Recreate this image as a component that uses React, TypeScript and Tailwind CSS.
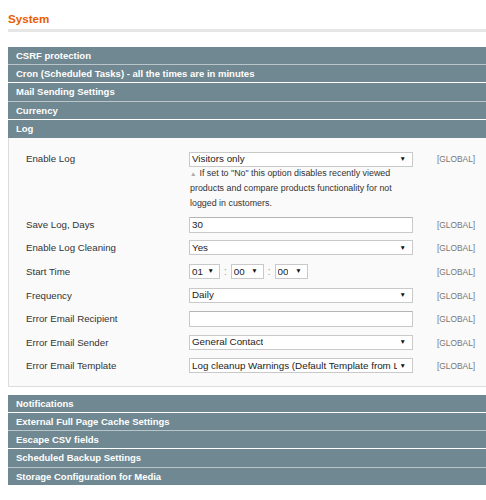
import React from 'react';

const topSections = [
  'CSRF protection',
  'Cron (Scheduled Tasks) - all the times are in minutes',
  'Mail Sending Settings',
  'Currency',
];

const bottomSections = [
  'Notifications',
  'External Full Page Cache Settings',
  'Escape CSV fields',
  'Scheduled Backup Settings',
  'Storage Configuration for Media',
];

function SectionHeader({ title, index }: { title: string; index: number }) {
  return (
    <div
      className={`h-[18.2px] bg-[#6f8891] pl-2 text-[9.5px] font-bold leading-[17px] text-white border-b ${
        index % 2 === 0 ? 'border-[#b9c5c9]' : 'border-white'
      }`}
    >
      {title}
    </div>
  );
}

function Select({ value, className = 'w-[224px] pr-[6px]' }: { value: string; className?: string }) {
  return (
    <div
      className={`flex h-[15px] items-center justify-between border border-[#c9c9c9] bg-white pl-[2px] text-[9.8px] leading-none text-[#222] ${className}`}
    >
      <span className="min-w-0 overflow-hidden whitespace-nowrap">{value}</span>
      <span className="ml-[3px] shrink-0 text-[6.5px] text-[#111]">▼</span>
    </div>
  );
}

function Input({ value = '' }: { value?: string }) {
  return (
    <div className="flex h-[16px] w-[224px] items-center border border-[#c9c9c9] border-t-[#b5b5b5] bg-white pl-[2px] text-[9.8px] leading-none text-[#222]">
      {value}
    </div>
  );
}

function Row({ label, children }: { label: string; children: React.ReactNode }) {
  return (
    <div className="flex min-h-[23.6px] items-start">
      <div className="w-[180px] pl-[17px] pt-[1px] text-[9.7px] leading-[14px] text-[#333]">{label}</div>
      <div className="w-[224px]">{children}</div>
      <div className="pl-[24px] pt-[1px] text-[8.4px] leading-[14px] text-[#777]">[GLOBAL]</div>
    </div>
  );
}

export default function App() {
  return (
    <div className="min-h-[500px] bg-white pl-2 pt-[11px] font-['Liberation_Sans',Arial,sans-serif]">
      <h3 className="text-[11.6px] font-bold leading-[15px] text-[#eb5e00]">System</h3>
      <div className="mt-[3px] h-[3px] bg-[#e6e6e6]" />

      <div className="mt-[15px]">
        {topSections.map((t, i) => (
          <SectionHeader key={t} title={t} index={i} />
        ))}
        <div className="h-[18px] bg-[#6f8891] pl-2 text-[9.5px] font-bold leading-[17px] text-white">Log</div>
        <div className="border border-t-0 border-r-0 border-[#dcdcdc] bg-[#fafafa] pb-[4px] pt-[14px]">
          <div className="mb-[6px] flex items-start">
            <div className="w-[180px] pl-[17px] text-[9.7px] leading-[14px] text-[#333]">Enable Log</div>
            <div className="w-[224px]">
              <Select value="Visitors only" />
              <p className="mt-[-1px] pl-[1px] text-[8.9px] leading-[15px] text-[#333]">
                <span className="mr-[3px] text-[6.5px] text-[#aaa]">▲</span>
                If set to "No" this option disables recently viewed products and compare products functionality for not
                logged in customers.
              </p>
            </div>
            <div className="pl-[24px] text-[8.4px] leading-[14px] text-[#777]">[GLOBAL]</div>
          </div>
          <Row label="Save Log, Days">
            <Input value="30" />
          </Row>
          <Row label="Enable Log Cleaning">
            <Select value="Yes" />
          </Row>
          <Row label="Start Time">
            <div className="flex items-center text-[10px] text-[#999]">
              <Select value="01" className="w-[31px] pr-[5px]" />
              <span className="px-[4px]">:</span>
              <Select value="00" className="w-[33px] pr-[5px]" />
              <span className="px-[4px]">:</span>
              <Select value="00" className="w-[33px] pr-[5px]" />
            </div>
          </Row>
          <Row label="Frequency">
            <Select value="Daily" />
          </Row>
          <Row label="Error Email Recipient">
            <Input />
          </Row>
          <Row label="Error Email Sender">
            <Select value="General Contact" />
          </Row>
          <Row label="Error Email Template">
            <Select value="Log cleanup Warnings (Default Template from Locale)" />
          </Row>
        </div>
      </div>

      <div className="mt-[8px]">
        {bottomSections.map((t, i) => (
          <SectionHeader key={t} title={t} index={i + 1} />
        ))}
      </div>
    </div>
  );
}
